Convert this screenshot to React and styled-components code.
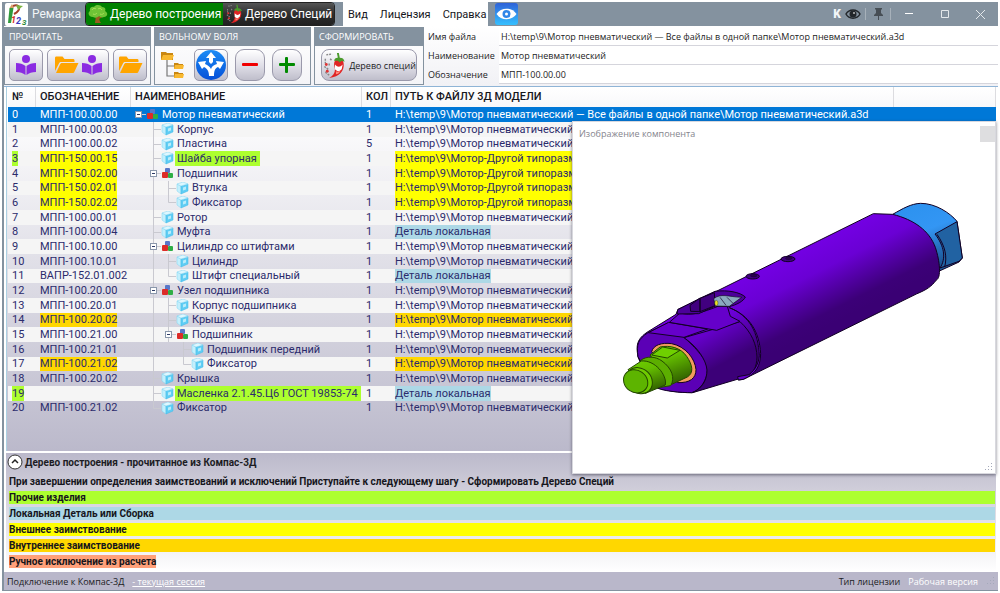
import React from 'react';
import styled, { createGlobalStyle, css } from 'styled-components';

const Global = createGlobalStyle`
  * { box-sizing: border-box; }
  body { margin: 0; background: #fff; font-family: Roboto, "Open Sans", sans-serif; font-size: 11px; color: #1c1c24; }
  button, input { font: inherit; color: inherit; }
  button { cursor: pointer; }
  svg { display: block; flex: none; }
`;

const slate = '#84929f';
const smallText = css`
  font-family: "Open Sans", "Noto Sans", sans-serif;
  font-size: 9px;
`;

const Shell = styled.div`
  min-height: 100vh;
  padding: 2px;
  display: flex;
  flex-direction: column;
`;
const Frame = styled.div`
  flex: 1;
  display: flex;
  flex-direction: column;
  position: relative;
  border-left: 2px solid ${slate};
  border-bottom: 1px solid ${slate};
`;

const TitleBar = styled.header`
  height: 24px;
  background: ${slate};
  display: flex;
  align-items: center;
  padding-left: 1px;
`;
const AppName = styled.span`
  width: 57px;
  padding-left: 4px;
  font-size: 12px;
  color: #f2f5f7;
`;
const Tabs = styled.nav`
  display: flex;
  height: 24px;
  border: 1px solid #222;
  border-radius: 4px;
  overflow: hidden;
`;
const Tab = styled.button`
  display: flex;
  align-items: center;
  gap: 2px;
  width: ${p => p.$w}px;
  padding: 0 2px;
  border: 0;
  white-space: nowrap;
  font-size: 12px;
  color: #fff;
  background: ${p => (p.$active ? '#008000' : 'linear-gradient(#555, #2e2e2e 50%, #202020)')};
`;
const Menu = styled.nav`
  display: flex;
  align-items: center;
  align-self: stretch;
  width: 145px;
  gap: 12px;
  margin: 0 7px 0 8px;
  padding-left: 5px;
  background: #fff;
`;
const MenuLink = styled.a`
  color: #16161c;
  text-decoration: none;
  font-size: 11px;
`;
const WindowTools = styled.div`
  margin-left: auto;
  display: flex;
  align-items: center;
`;
const KompasMark = styled.span`
  font-size: 12px;
  font-weight: 900;
  color: #f2f5f7;
`;
const PlainButton = styled.button`
  display: grid;
  place-items: center;
  padding: 0;
  border: 0;
  background: none;
  width: ${p => p.$w || 20}px;
  height: ${p => p.$h || 22}px;
`;
const Separator = styled.span`
  width: 1px;
  height: 12px;
  background: #a7b1ba;
`;

const Ribbon = styled.section`
  display: flex;
  height: 61px;
  gap: 3px;
  border-bottom: 1px solid #8fb4d6;
  padding-top: 1px;
  background: linear-gradient(#fff, #f1f1f5);
`;
const Group = styled.section`
  display: flex;
  flex-direction: column;
  width: ${p => p.$w}px;
  height: 58px;
  border: 1px solid ${slate};
  background: linear-gradient(#fff, #f4f4f7);
`;
const GroupTitle = styled.h2`
  ${smallText}
  margin: 0;
  height: 18px;
  padding-left: 4px;
  line-height: 18px;
  font-weight: 400;
  color: #fff;
  background: ${slate};
`;
const GroupBody = styled.div`
  flex: 1;
  display: flex;
  align-items: center;
  gap: ${p => p.$gap || 4}px;
  padding-left: ${p => p.$left || 4}px;
`;
const ToolButton = styled.button`
  ${smallText}
  display: flex;
  align-items: center;
  justify-content: center;
  gap: 3px;
  width: ${p => p.$w}px;
  height: 32px;
  padding: 0;
  border: 1px solid #9a99ab;
  border-radius: ${p => p.$r || 5}px;
  background: linear-gradient(#fff, #dedde6 55%, #bfbecb);
  white-space: nowrap;
`;
const Fields = styled.form`
  ${smallText}
  flex: 1;
  display: grid;
  grid-template-columns: 71px 1fr;
  grid-auto-rows: 19px;
  align-items: center;
  padding-left: 1px;
`;
const Field = styled.input`
  height: 19px;
  width: 100%;
  padding: 0 2px;
  border: 0;
  border-bottom: 1px solid #d5d5dc;
  background: #fff;
  outline: 0;
`;

const TreePanel = styled.main`
  flex: 1;
  margin: 0 2px 2px 2px;
  padding-left: 1px;
  border-left: 1px solid #abd0e2;
  background: linear-gradient(#fff 20px, #bbb9cb);
`;
const Table = styled.table`
  width: 100%;
  table-layout: fixed;
  border-collapse: separate;
  border-spacing: 0;
  font-size: 11px;
`;
const HeadCell = styled.th`
  height: 20px;
  padding: 0 0 0 4px;
  text-align: left;
  font-size: 11px;
  font-weight: 500;
  line-height: 20px;
  color: #16161c;
  background: linear-gradient(#fff, #f8f8fa);
  border-right: 1px solid #dcdce0;
  white-space: nowrap;
`;
const Row = styled.tr`
  height: 15px;
  line-height: 15px;
  color: #2b2b6c;
  background: ${p => (p.$odd ? '#f5f5f5' : 'transparent')};
  &:nth-child(3n) { height: 14px; line-height: 14px; }
  ${p => p.$selected && css`
    background: #0078d7;
    color: #fff;
  `}
`;
const Cell = styled.td`
  padding: 0 0 0 4px;
  overflow: hidden;
  white-space: nowrap;
`;
const NameCell = styled(Cell)`
  padding: 0;
`;
const Branch = styled.div`
  display: flex;
  height: 14px;
  align-items: center;
`;
const Mark = styled.span`
  display: inline-block;
  vertical-align: top;
  background: ${p => p.$color || 'transparent'};
`;
const NameMark = styled(Mark)`
  margin-left: 1px;
  padding: 0 3px 0 2px;
`;

const Legend = styled.footer`
  margin: 0 2px;
  height: 119px;
  padding: 0 1px 0 1px;
  background: linear-gradient(#bbb9cb, #cfcdd9 30%, #fff);
`;
const Summary = styled.button`
  display: flex;
  align-items: center;
  gap: 2px;
  padding: 0;
  border: 0;
  background: none;
  height: 18px;
  font-size: 10px;
  font-weight: 700;
`;
const LegendList = styled.ul`
  list-style: none;
  margin: 4px 0 0;
  padding: 0 0 0 2px;
  display: grid;
  gap: 3px;
`;
const LegendItem = styled.li`
  height: 13px;
  line-height: 13px;
  font-size: 10px;
  font-weight: 700;
  color: #16161c;
  justify-self: ${p => (p.$short ? 'start' : 'stretch')};
  background: ${p => p.$color || 'transparent'};
`;
const Status = styled.div`
  ${smallText}
  display: flex;
  align-items: center;
  gap: 8px;
  height: 18px;
  padding: 0 3px;
  background: #b9b7ca;
`;
const StatusLink = styled.a`
  color: #fff;
  text-decoration: ${p => (p.$plain ? 'none' : 'underline')};
`;
const Spacer = styled.span`
  flex: 1;
`;

const Preview = styled.aside`
  position: absolute;
  top: 119px;
  right: 2px;
  width: 424px;
  height: 353px;
  border: 1px solid #d8d8de;
  background: #fff;
  box-shadow: 0 1px 3px rgba(40, 40, 60, .6);
  display: flex;
  flex-direction: column;
  justify-content: space-between;
  align-items: flex-end;
`;
const PreviewHead = styled.div`
  ${smallText}
  align-self: stretch;
  display: flex;
  justify-content: space-between;
  padding: 4px 0 0 6px;
  line-height: 16px;
  color: #85858d;
`;
const PreviewClose = styled.button`
  width: 15px;
  height: 16px;
  padding: 0;
  border: 0;
  background: #dedee0;
`;
const PreviewFoot = styled.div`
  padding: 16px 2px 1px;
`;

const Logo = () => (
  <svg width="23" height="23" viewBox="0 0 23 23">
    <rect width="23" height="23" rx="2" fill="#fff" />
    <path d="M3 20 4.500 5h4L6 20z" fill="#2f9a3c" />
    <path d="M4.500 5 7 1l2 4z" fill="#d9a067" />
    <path d="M8 3c7-3 9 4 1 8" fill="none" stroke="#a5402a" strokeWidth="2" />
    <path d="m11 2 7 1-5 4" fill="#7cb342" />
    <text x="6" y="20" fontSize="9" fontWeight="700" fontStyle="italic" fill="#d42f25">1</text>
    <text x="11" y="21" fontSize="9" fontWeight="700" fontStyle="italic" fill="#3a3ac0">2</text>
    <text x="17" y="22" fontSize="8" fontWeight="700" fontStyle="italic" fill="#2e8a36">3</text>
  </svg>
);
const OakIcon = () => (
  <svg width="20" height="20" viewBox="0 0 20 20">
    <path d="M8 11 7 19h6c-2-2-2-5-1-8z" fill="#9a5b20" />
    <path d="M9 13 5 10M11 14l5-3" stroke="#9a5b20" strokeWidth="2" />
    <path d="M5 13c-4 0-6-4-3-6C1 4 4 2 6 3c2-3 7-2 8 0 3 0 4 2 3 4 4 2 2 6-1 6-2 1-4 0-5-1-2 2-4 2-6 1z" fill="#6fc436" />
    <path d="M4 6c1-2 3-2 4-1M10 5c1-1 3-1 4 1M5 10c2 1 3 0 4-1M12 10c2 1 3 0 4-1" stroke="#a8e05a" fill="none" />
  </svg>
);
const PepperIcon = ({ h = 21 }) => (
  <svg width={Math.round(h * 0.9)} height={h} viewBox="0 0 24 28">
    <path d="M4 3 10 2M3 7v5M2 15l4 3M3 21l4 3M8 7l2 2M7 12v3" stroke="#888" strokeWidth="1.500" strokeDasharray="2 1" fill="none" />
    <path d="M13 9c2-3 9-2 9 3 1 7-4 14-15 15 4-2 6-5 6-9 0-3-2-5 0-9z" fill="#e02424" />
    <path d="M13 13c3 3 5 3 8 0l-1 5c-3 3-5 2-7 0z" fill="#fff" />
    <path d="M14 20c2 1 4 0 5-1-1 3-3 4-5 4z" fill="#ff8a7a" />
    <path d="M12 9c1-3 3-3 4-3l-1-5h2l1 5c3 0 4 1 5 4l-3-1-2 2-2-2z" fill="#4b9b2c" />
    <circle cx="4" cy="13" r="1.500" fill="#d33" /><circle cx="5" cy="20" r="1.500" fill="#d33" />
  </svg>
);
const ReaderIcon = () => (
  <svg width="20" height="22" viewBox="0 0 20 22" fill="#8a2be2">
    <circle cx="10" cy="5" r="4" />
    <path d="M0 9c4 0 7 1 9.500 3v9C7 19 4 18 0 18zM20 9c-4 0-7 1-9.500 3v9c2.500-2 5.500-3 9.500-3z" />
  </svg>
);
const FolderIcon = () => (
  <svg width="25" height="18" viewBox="0 0 25 18" fill="#ffa500">
    <path d="M1 15V2c0-1 .5-1.500 1.500-1.500h6l2 2.500H19c1 0 1.500.5 1.500 1.500V6H7c-1 0-1.500.5-2 1.500z" />
    <path d="M2 17 6 8.500C6.500 7.500 7 7 8 7h16.500l-4 8.500c-.5 1-1 1.500-2 1.500z" />
  </svg>
);
const FolderTreeIcon = () => (
  <svg width="28" height="28" viewBox="0 0 28 28">
    <path d="M8 9v16h8M8 15h8" fill="none" stroke="#777" strokeWidth="1.200" />
    <g fill="#c98712">
      <path d="M2 1h5l1 1h6v7H2z" /><path d="M15 12h4l1 1h4v5h-9z" /><path d="M15 21h4l1 1h4v5h-9z" />
      <path d="m2 9 2-5h11l-2 5zM15 18l1-4h9l-1 4zM15 27l1-4h9l-1 4z" fill="#f8b830" />
    </g>
  </svg>
);
const RoutesIcon = () => (
  <svg width="32" height="30" viewBox="0 0 32 30">
    <defs><linearGradient id="routes" x2="0" y2="1"><stop stopColor="#1b8cf5" /><stop offset="1" stopColor="#0650d8" /></linearGradient></defs>
    <ellipse cx="16" cy="15" rx="15" ry="15" fill="url(#routes)" />
    <path d="M14 12V8h-3l5-6 5 6h-3v4l-2 2z" fill="#fff" />
    <path d="M3 12l8-1-1 3c3 1 5 3 6 5 1-3 3-4 6-5l-1-3 8 1-4 7-2-2c-3 1-4 4-4 9h-5c0-4-1-7-5-9l-2 2z" fill="#fff" />
  </svg>
);
const SignIcon = ({ plus }) => (
  <svg width="16" height="16" viewBox="0 0 16 16" fill={plus ? '#008a00' : '#f00000'}>
    <rect x="0" y="6" width="16" height="3" rx="1" />
    {plus && <rect x="6" y="0" width="3" height="16" rx="1" />}
  </svg>
);
const EyeTile = () => (
  <svg width="23" height="22" viewBox="0 0 23 22">
    <defs><linearGradient id="tile" x1="0" y1="0" x2="0" y2="1"><stop stopColor="#2f62d8" /><stop offset="1" stopColor="#35c0ff" /></linearGradient></defs>
    <rect width="23" height="22" rx="3" fill="url(#tile)" />
    <path d="M1.500 11C6 4 17 4 21.500 11 17 18 6 18 1.500 11z" fill="#fff" />
    <circle cx="11.500" cy="11" r="4" fill="#2f86e8" /><circle cx="11.500" cy="11" r="1.500" fill="#fff" />
  </svg>
);
const EyeIcon = () => (
  <svg width="16" height="12" viewBox="0 0 16 12">
    <path d="M1 6C4 .5 12 .5 15 6 12 11.500 4 11.500 1 6z" fill="#84929f" stroke="#22262a" strokeWidth="1.500" />
    <circle cx="8" cy="6" r="3.500" fill="#22262a" /><circle cx="9" cy="5" r="1" fill="#bbb" />
  </svg>
);
const PinIcon = () => (
  <svg width="9" height="12" viewBox="0 0 9 12" fill="#474e55">
    <path d="M1 0h7v1L7 2v3l2 2v1H5v4H4V8H0V7l2-2V2L1 1z" />
  </svg>
);
const PartIcon = () => (
  <svg width="13" height="13" viewBox="0 0 13 13">
    <path d="M1 2 5 4v8L1 9z" fill="#c4effc" stroke="#7fd4f2" strokeWidth=".5" />
    <path d="M5 4l7-2v7l-7 3z" fill="#5fcdf4" stroke="#43b9e6" strokeWidth=".5" />
    <path d="M1 2l6-2 5 2-7 2z" fill="#def7fe" stroke="#7fd4f2" strokeWidth=".5" />
    <path d="M7 5.500l3-1v3l-3 1z" fill="#b8ecfb" />
  </svg>
);
const AssemblyIcon = () => (
  <svg width="13" height="13" viewBox="0 0 13 13">
    <rect x="4" y="1" width="5" height="5" rx="1" fill="#5877c8" />
    <rect x="1" y="5" width="6" height="6" rx="1" fill="#dc2c28" />
    <rect x="7" y="6" width="5" height="5" rx="1" fill="#2fae45" />
  </svg>
);
const guidePaths = {
  '|': 'M7.500 0v15',
  t: 'M7.500 0v15M7.500 7.500H15',
  l: 'M7.500 0v7.500H15',
  b: 'M7.500 0v15M7.500 7.500H15',
  r: 'M7.500 7.500H15',
};
const Guide = ({ kind }) => (
  <svg width="15" height="15" viewBox="0 0 15 15" fill="none">
    {kind !== ' ' && <path d={guidePaths[kind]} stroke="#c9c9d0" />}
    {(kind === 'b' || kind === 'r') && <>
      <rect x="4.500" y="4.500" width="6" height="6" fill="#fff" stroke="#8a97ab" />
      <path d="M6 7.500h3" stroke="#2c3a66" />
    </>}
  </svg>
);

const MotorSvg = styled.svg`
  width: 390px;
  height: 230px;
  margin-right: 5px;
`;
const Motor = () => (
  <MotorSvg viewBox="0 0 1170 690" role="img" aria-label="Мотор пневматический">
    <defs>
      <linearGradient id="body" gradientUnits="userSpaceOnUse" x1="590" y1="210" x2="700" y2="430">
        <stop stopColor="#7400e4" /><stop offset=".35" stopColor="#6a00d4" /><stop offset=".85" stopColor="#3c0078" /><stop offset="1" stopColor="#3a0074" />
      </linearGradient>
      <linearGradient id="neck" gradientUnits="userSpaceOnUse" x1="320" y1="460" x2="390" y2="590">
        <stop stopColor="#6500ca" /><stop offset=".7" stopColor="#3c0078" />
      </linearGradient>
      <linearGradient id="cap" x1="0" y1="0" x2=".4" y2="1"><stop stopColor="#2b91ee" /><stop offset=".5" stopColor="#3396f4" /><stop offset="1" stopColor="#1c5594" /></linearGradient>
      <linearGradient id="shaft" x1="0" y1="0" x2=".4" y2="1"><stop stopColor="#6fd000" /><stop offset=".4" stopColor="#64bd00" /><stop offset="1" stopColor="#346600" /></linearGradient>
    </defs>
    <g stroke="#120024" strokeWidth="3" strokeLinejoin="round">
      <path d="M878 103c30-17 55-32 84-33 45 0 88 29 109 54l16 110-10 12-61 28z" fill="url(#cap)" />
      <path d="M1005 162l66-37 16 109-10 10-57 20c19-29 13-66-15-102z" fill="#2162a2" />
      <path d="M1034 261c8-32 2-62-23-98" fill="none" />
      <path d="M228 403 234 388 345 336 820 101l58 2c64 16 110 49 128 99 14 42 18 92 3 98-15 20-29 29-60 42L430 598l-15 2-2-12-93 32-45 18c-46 0-100-7-130-32l-31-75c-6-36-4-54 30-76z" fill="url(#body)" />
      <path d="M114 530c-5-37 0-53 30-72l60-29 50 45c45 40 70 74 68 97-1 28-19 58-47 67-30 0-90-4-112-18z" fill="#5b00b6" />
      <path d="M252 473 420 425c35 32 50 69 51 106-1 29-10 47-26 57L278 638c31-15 43-40 43-68-3-31-29-70-69-97z" fill="url(#neck)" />
      <path d="M145 458 206 427 323 447 252 472z" fill="#6600cb" />
      <path d="M208 427 240 399c35 9 63 0 119-22l23 2 9 30 29 15-70 27z" fill="#6500ca" />
      <path d="M233 389 300 355l45-21c38-5 76 3 91 17-5 13-28 24-49 29l-41-2-50 23-65 1z" fill="#4c009a" />
      <path d="M270 376 300 354v41l-28-1zM300 355l43-17 2 39-45 18z" fill="#41007f" />
      <path d="M341 356c23-17 40-6 84-4l-37 27-42-1z" fill="#8aaabf" strokeWidth="2" />
      <path d="M360 352l18 24M381 352l18 18" strokeWidth="2" />
      <ellipse cx="349" cy="369" rx="5" ry="8" fill="#e7e722" strokeWidth="1" />
      <path d="M388 383c61 24 87 75 90 144-3 28-13 42-31 57l-34 6 2 10 15-2c39-17 51-40 52-77-4-67-34-115-94-138z" fill="#6300c8" />
      <ellipse cx="458" cy="289" rx="20" ry="8" fill="#41007f" /><ellipse cx="461" cy="287" rx="10" ry="4" fill="#29004e" strokeWidth="1" />
      <ellipse cx="564" cy="237" rx="21" ry="8" fill="#41007f" /><ellipse cx="566" cy="235" rx="10" ry="4" fill="#29004e" strokeWidth="1" />
      <path d="M155 515c5-20 30-28 60-24 41 8 70 44 73 78 0 26-18 40-55 39z" fill="#f19a5d" />
      <path d="M150 525 180 501c30-6 62 2 80 28 18 26 22 50 2 62L213 614z" fill="url(#shaft)" stroke="#234700" />
      <path d="M155 525 188 501 240 511 202 534z" fill="#6fd000" stroke="#234700" />
      <path d="M122 541c18-14 45-12 64 2 30 22 40 52 26 74l-30 5z" fill="#5cae00" stroke="#234700" />
      <path d="M84 569 124 543c40-4 78 42 72 72L136 640z" fill="url(#shaft)" stroke="#234700" />
      <ellipse cx="118" cy="602" rx="42" ry="36" transform="rotate(45 118 602)" fill="#6fca00" stroke="#234700" />
      <ellipse cx="107" cy="604" rx="38" ry="33" transform="rotate(35 107 604)" fill="#5db400" stroke="#234700" />
    </g>
  </MotorSvg>
);
const Grip = () => (
  <svg width="9" height="9" viewBox="0 0 9 9" fill="#a4a9ba">
    <path d="M7 0h1v1H7zM7 3h1v1H7zM4 3h1v1H4zM7 6h1v1H7zM4 6h1v1H4zM1 6h1v1H1z" />
  </svg>
);

const ROOT = 'H:\\temp\\9\\Мотор пневматический — Все файлы в одной папке\\Мотор пневматический.a3d';
const OTHER = 'H:\\temp\\9\\Мотор-Другой типоразмер';
const LOCAL = 'Деталь локальная';
const lime = '#adff2f', yellow = '#ffff00', gold = '#ffd700', blue = '#add8e6';

// guides, code, name, quantity, path, code colour, path colour, name colour
const rows = [
  ['r', 'МПП-100.00.00', 'Мотор пневматический', 1, ROOT],
  [' t', 'МПП-100.00.03', 'Корпус', 1, ROOT],
  [' t', 'МПП-100.00.02', 'Пластина', 5, ROOT],
  [' t', 'МПП-150.00.15', 'Шайба упорная', 1, OTHER, yellow, yellow, lime],
  [' b', 'МПП-150.02.00', 'Подшипник', 1, OTHER, yellow, yellow],
  [' |t', 'МПП-150.02.01', 'Втулка', 1, OTHER, yellow, yellow],
  [' |l', 'МПП-150.02.02', 'Фиксатор', 1, OTHER, yellow, yellow],
  [' t', 'МПП-100.00.01', 'Ротор', 1, ROOT],
  [' t', 'МПП-100.00.04', 'Муфта', 1, LOCAL, null, blue],
  [' b', 'МПП-100.10.00', 'Цилиндр со штифтами', 1, ROOT],
  [' |t', 'МПП-100.10.01', 'Цилиндр', 1, ROOT],
  [' |l', 'ВАПР-152.01.002', 'Штифт специальный', 1, LOCAL, null, blue],
  [' b', 'МПП-100.20.00', 'Узел подшипника', 1, ROOT],
  [' |t', 'МПП-100.20.01', 'Корпус подшипника', 1, ROOT],
  [' |t', 'МПП-100.20.02', 'Крышка', 1, ROOT, gold, gold],
  [' |b', 'МПП-100.21.00', 'Подшипник', 1, ROOT],
  [' | t', 'МПП-100.21.01', 'Подшипник передний', 1, ROOT],
  [' | l', 'МПП-100.21.02', 'Фиксатор', 1, ROOT, gold, gold],
  [' t', 'МПП-100.20.02', 'Крышка', 1, ROOT],
  [' t', '', 'Масленка 2.1.45.Ц6 ГОСТ 19853-74', 1, LOCAL, null, blue, lime],
  [' l', 'МПП-100.21.02', 'Фиксатор', 1, ROOT],
];

const legend = [
  ['При завершении определения заимствований и исключений Приступайте к следующему шагу - Сформировать Дерево Специй'],
  ['Прочие изделия', lime],
  ['Локальная Деталь или Сборка', blue],
  ['Внешнее заимствование', yellow],
  ['Внутреннее заимствование', gold],
  ['Ручное исключение из расчета', '#ffa07a', true],
];

const TreeRow = ({ row, index }) => {
  const [guides, code, name, qty, path, codeColor, pathColor, nameColor] = row;
  const isAssembly = /[rb]$/.test(guides);
  return (
    <Row $odd={index % 2 === 1} $selected={index === 0}>
      <Cell><Mark $color={nameColor}>{index}</Mark></Cell>
      <Cell><Mark $color={codeColor}>{code}</Mark></Cell>
      <NameCell>
        <Branch>
          {[...guides].map((kind, i) => <Guide key={i} kind={kind} />)}
          {isAssembly ? <AssemblyIcon /> : <PartIcon />}
          <NameMark $color={nameColor}>{name}</NameMark>
        </Branch>
      </NameCell>
      <Cell>{qty}</Cell>
      <Cell><Mark $color={pathColor}>{path}</Mark></Cell>
      <Cell />
    </Row>
  );
};

export default function App() {
  return (
    <Shell>
      <Global />
      <Frame>
        <TitleBar>
          <Logo />
          <AppName>Ремарка</AppName>
          <Tabs>
            <Tab $active $w={137}><OakIcon />Дерево построения</Tab>
            <Tab $w={111}><PepperIcon h={20} />Дерево Специй</Tab>
          </Tabs>
          <Menu>
            <MenuLink href="#view">Вид</MenuLink>
            <MenuLink href="#license">Лицензия</MenuLink>
            <MenuLink href="#help">Справка</MenuLink>
          </Menu>
          <PlainButton $w={23} aria-label="Просмотр"><EyeTile /></PlainButton>
          <WindowTools>
            <KompasMark>K</KompasMark>
            <PlainButton $w={24} aria-label="Показать Компас"><EyeIcon /></PlainButton>
            <Separator />
            <PlainButton $w={24} aria-label="Закрепить"><PinIcon /></PlainButton>
            <Separator />
            <PlainButton $w={36} aria-label="Свернуть"><svg width="8" height="8"><path d="M0 3.500h8" stroke="#fff" /></svg></PlainButton>
            <PlainButton $w={36} aria-label="Развернуть"><svg width="8" height="8"><path d="M.5.5h7v7h-7z" fill="none" stroke="#e4e8eb" /></svg></PlainButton>
            <PlainButton $w={35} aria-label="Закрыть"><svg width="9" height="9"><path d="m0 0 9 9M9 0 0 9" stroke="#e4e8eb" /></svg></PlainButton>
          </WindowTools>
        </TitleBar>

        <Ribbon>
          <Group $w={147}>
            <GroupTitle>ПРОЧИТАТЬ</GroupTitle>
            <GroupBody>
              <ToolButton $w={34} aria-label="Прочитать"><ReaderIcon /></ToolButton>
              <ToolButton $w={62} aria-label="Открыть и прочитать"><FolderIcon /><ReaderIcon /></ToolButton>
              <ToolButton $w={34} aria-label="Открыть"><FolderIcon /></ToolButton>
            </GroupBody>
          </Group>
          <Group $w={157}>
            <GroupTitle>ВОЛЬНОМУ ВОЛЯ</GroupTitle>
            <GroupBody $gap={7}>
              <PlainButton $w={28} $h={28} aria-label="Структура"><FolderTreeIcon /></PlainButton>
              <ToolButton $w={34} aria-label="Маршруты"><RoutesIcon /></ToolButton>
              <ToolButton $w={30} $r={9} aria-label="Исключить"><SignIcon /></ToolButton>
              <ToolButton $w={30} $r={9} aria-label="Добавить"><SignIcon plus /></ToolButton>
            </GroupBody>
          </Group>
          <Group $w={110}>
            <GroupTitle>СФОРМИРОВАТЬ</GroupTitle>
            <GroupBody $left={6}>
              <ToolButton $w={96} $r={8}><PepperIcon h={27} />Дерево специй</ToolButton>
            </GroupBody>
          </Group>
          <Fields>
            <label htmlFor="file">Имя файла</label>
            <Field id="file" defaultValue={ROOT} />
            <label htmlFor="title">Наименование</label>
            <Field id="title" defaultValue="Мотор пневматический" />
            <label htmlFor="code">Обозначение</label>
            <Field id="code" defaultValue="МПП-100.00.00" />
          </Fields>
        </Ribbon>

        <TreePanel>
          <Table>
            <colgroup>
              <col style={{ width: 28 }} /><col style={{ width: 95 }} /><col style={{ width: 231 }} />
              <col style={{ width: 29 }} /><col /><col style={{ width: 102 }} />
            </colgroup>
            <thead>
              <tr>
                <HeadCell>№</HeadCell>
                <HeadCell>ОБОЗНАЧЕНИЕ</HeadCell>
                <HeadCell>НАИМЕНОВАНИЕ</HeadCell>
                <HeadCell>КОЛ</HeadCell>
                <HeadCell>ПУТЬ К ФАЙЛУ 3Д МОДЕЛИ</HeadCell>
                <HeadCell />
              </tr>
            </thead>
            <tbody>
              {rows.map((row, i) => <TreeRow key={i} row={row} index={i} />)}
            </tbody>
          </Table>
        </TreePanel>

        <Legend>
          <Summary>
            <svg width="16" height="16" viewBox="0 0 16 16" fill="none">
              <circle cx="8" cy="8" r="7" fill="#fff" stroke="#333" /><path d="m5 9 3-3 3 3" stroke="#222" strokeWidth="1.500" />
            </svg>
            Дерево построения - прочитанное из Компас-3Д
          </Summary>
          <LegendList>
            {legend.map(([text, color, short]) => (
              <LegendItem key={text} $color={color} $short={short}>{text}</LegendItem>
            ))}
          </LegendList>
        </Legend>
        <Status>
          <span>Подключение к Компас-3Д</span>
          <StatusLink href="#session">- текущая сессия</StatusLink>
          <Spacer />
          <span>Тип лицензии</span>
          <StatusLink $plain href="#type">Рабочая версия</StatusLink>
          <Grip />
        </Status>

        <Preview>
          <PreviewHead>Изображение компонента<PreviewClose aria-label="Закрыть" /></PreviewHead>
          <Motor />
          <PreviewFoot><Grip /></PreviewFoot>
        </Preview>
      </Frame>
    </Shell>
  );
}
